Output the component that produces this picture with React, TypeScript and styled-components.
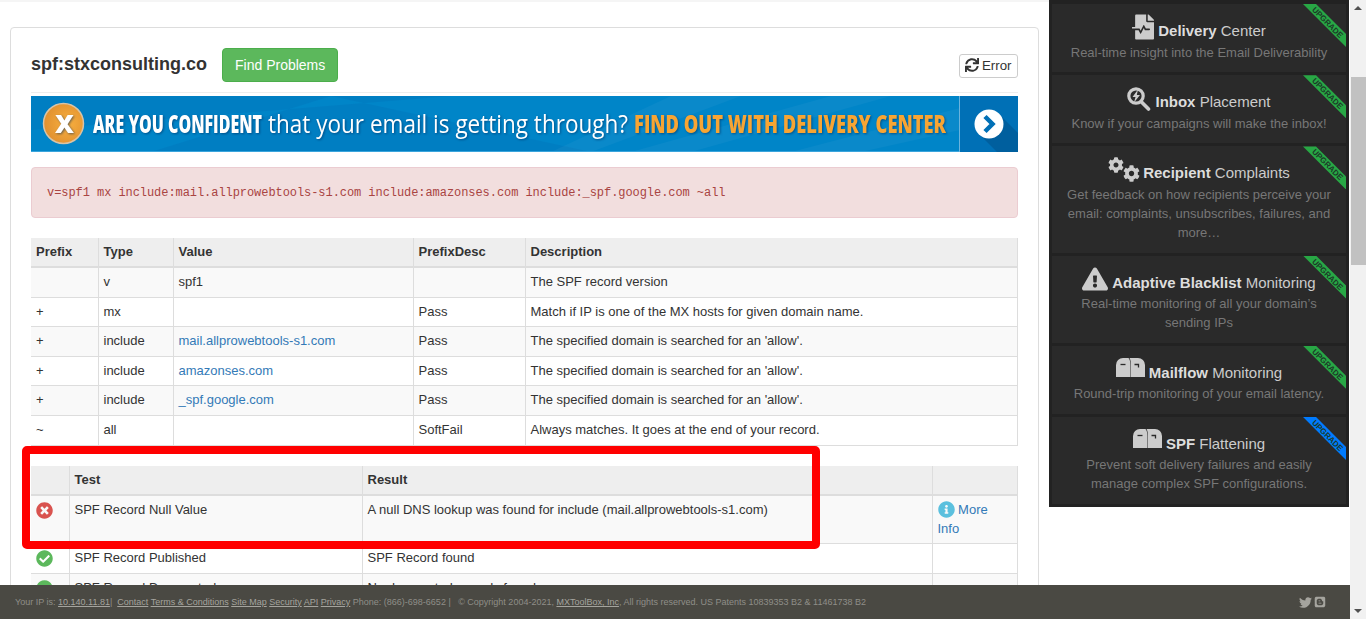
import React from "react";
import styled, { createGlobalStyle } from "styled-components";
import {
  FaCheckCircle,
  FaCog,
  FaExclamationTriangle,
  FaFileMedicalAlt,
  FaInfoCircle,
  FaSync,
  FaTimesCircle,
  FaTwitter,
  FaBlogger,
} from "react-icons/fa";

const GlobalStyle = createGlobalStyle`
  html, body {
    margin: 0;
    height: 100%;
    overflow: hidden;
    background: #fff;
  }
  body {
    font-family: "Liberation Sans", Arial, sans-serif;
    font-size: 13px;
    color: #333;
  }
  * { box-sizing: border-box; }
`;

const Page = styled.div`
  display: flex;
  width: 1366px;
  height: 619px;
  overflow: hidden;
`;

const Main = styled.div`
  display: flex;
  flex-direction: column;
  width: 1350px;
  height: 619px;
`;

const Content = styled.div`
  display: flex;
  align-items: flex-start;
  height: 585px;
  overflow: hidden;
`;

const LeftPane = styled.div`
  width: 1049px;
  height: 585px;
  padding: 25px 10px 0;
  border-top: 2px solid #f5f5f5;
  overflow: hidden;
`;

const Card = styled.div`
  border: 1px solid #ddd;
  border-radius: 4px;
  padding: 20px 20px 0;
  height: 700px;
`;

const TitleRow = styled.div`
  display: flex;
  align-items: flex-start;
  height: 45px;
  border-bottom: 1px solid #eee;
`;

const Title = styled.h2`
  margin: 0 15px 0 0;
  font-size: 18px;
  line-height: 33px;
  font-weight: bold;
  color: #333;
`;

const FindButton = styled.button`
  height: 34px;
  padding: 0 12px;
  background: #5cb85c;
  border: 1px solid #4cae4c;
  border-radius: 4px;
  color: #fff;
  font: 14px "Liberation Sans", Arial, sans-serif;
`;

const ErrorButton = styled.button`
  display: flex;
  align-items: center;
  gap: 3px;
  height: 24px;
  width: 59px;
  margin: 6px 0 0 auto;
  padding: 0 0 2px 5px;
  background: #fff;
  border: 1px solid #ccc;
  border-radius: 3px;
  color: #333;
  font: 13.3px "Liberation Sans", Arial, sans-serif;
`;

const BannerBox = styled.div`
  margin-top: 3px;
  height: 56px;
`;

const BannerArt = styled.svg`
  display: block;
  width: 987px;
  height: 56px;
`;

const BannerText = styled.text<{ $weight: number; $size: number; $color: string }>`
  font-family: "Open Sans", sans-serif;
  font-weight: ${({ $weight }) => $weight};
  font-size: ${({ $size }) => $size}px;
  fill: ${({ $color }) => $color};
  filter: drop-shadow(1px 1px 1px rgba(0, 40, 90, 0.55));
`;

const RecordAlert = styled.div`
  margin-top: 15px;
  height: 51px;
  padding: 0 15px;
  display: flex;
  align-items: center;
  background: #f2dede;
  border: 1px solid #ebccd1;
  border-radius: 4px;
  color: #a94442;
  font-family: "Liberation Mono", monospace;
  font-size: 12px;
  letter-spacing: -0.06px;
`;

const Table = styled.table<{ $top: number }>`
  width: 986px;
  margin-top: ${({ $top }) => $top}px;
  border-collapse: collapse;
  table-layout: fixed;
  font-size: 13px;
  line-height: 18.57px;
`;

const Col = styled.col<{ $w: number }>`
  width: ${({ $w }) => $w}px;
`;

const Th = styled.th`
  padding: 4.6px 5px 5px;
  text-align: left;
  font-weight: bold;
  background: #eee;
  border-bottom: 2px solid #ddd;
  border-left: 1px solid #ddd;
  border-right: 1px solid #ddd;
  &:first-child { border-left: 0; }
`;

const Td = styled.td`
  padding: 5px;
  vertical-align: top;
  border-bottom: 1px solid #ddd;
  border-left: 1px solid #ddd;
  border-right: 1px solid #ddd;
  &:first-child { border-left: 0; }
`;

const Tr = styled.tr`
  &:nth-child(odd) { background: #f9f9f9; }
`;

const Link = styled.a`
  color: #337ab7;
`;

const TestsWrap = styled.div`
  position: relative;
  margin-top: 20.4px;
`;

const RedBox = styled.div`
  position: absolute;
  left: -9px;
  top: -20px;
  width: 798px;
  height: 103px;
  border: 8px solid #f00;
  border-radius: 5px;
`;

const StatusCell = styled(Td)`
  padding: 6px 5px 0;
  line-height: 0;
`;

const Fail = styled(FaTimesCircle)`
  width: 17px;
  height: 17px;
  color: #d9534f;
`;

const Pass = styled(FaCheckCircle)`
  width: 17px;
  height: 17px;
  color: #5cb85c;
`;

const Info = styled(FaInfoCircle)`
  width: 17px;
  height: 17px;
  color: #5bc0de;
  vertical-align: -4px;
`;

const Sidebar = styled.div`
  width: 300px;
  padding: 4px 3px 3px;
  background: #222;
  display: flex;
  flex-direction: column;
  gap: 3px;
`;

const Promo = styled.div`
  position: relative;
  padding: 10px 12px 10.7px;
  background: #2a2a2a;
  text-align: center;
  overflow: hidden;
`;

const PromoTitle = styled.div`
  display: flex;
  justify-content: center;
  align-items: flex-end;
  gap: 4px;
  height: 28.5px;
  font-size: 15px;
  line-height: 20px;
  color: #ccc;
  b { color: #ddd; }
`;

const PromoLabel = styled.span`
  margin-bottom: 1.5px;
`;

const PromoText = styled.div`
  font-size: 13px;
  line-height: 19px;
  color: #777;
`;

const Ribbon = styled.div<{ $color: string }>`
  position: absolute;
  top: 0;
  right: 0;
  width: 43px;
  height: 43px;
  background: ${({ $color }) => $color};
  clip-path: polygon(0 0, 13px 0, 43px 30px, 43px 43px);
`;

const RibbonText = styled.span`
  position: absolute;
  top: 14px;
  left: 1px;
  width: 46px;
  text-align: center;
  font-size: 8px;
  font-weight: bold;
  line-height: 10px;
  color: #1c3a28;
  transform: rotate(45deg);
`;

const FileIcon = styled(FaFileMedicalAlt)`
  width: 22px;
  height: 26px;
  margin-bottom: 3px;
`;

const CogsGroup = styled.span`
  display: flex;
  width: 31px;
  height: 25px;
  margin-bottom: 3px;
`;

const SmallCog = styled(FaCog)`
  flex: none;
  width: 16px;
  height: 16px;
  align-self: flex-start;
`;

const LargeCog = styled(FaCog)`
  flex: none;
  width: 17px;
  height: 17px;
  margin-left: -1px;
  align-self: flex-end;
`;

const CogsIcon = () => (
  <CogsGroup>
    <SmallCog />
    <LargeCog />
  </CogsGroup>
);

const WarnIcon = styled(FaExclamationTriangle)`
  width: 26px;
  height: 24px;
  margin-bottom: 3px;
`;

const DrawnIcon = styled.svg<{ $w: number; $h: number; $lift: number }>`
  width: ${({ $w }) => $w}px;
  height: ${({ $h }) => $h}px;
  margin-bottom: ${({ $lift }) => $lift}px;
`;

const InboxIcon = () => (
  <DrawnIcon viewBox="0 0 24 24" $w={24} $h={24} $lift={3}>
    <circle cx="9" cy="9" r="7.200" fill="none" stroke="#ccc" strokeWidth="3.200" />
    <path d="M11 2.500 5.500 10h3l-1.500 5.500L13 8H9.800z" fill="#ccc" />
    <path d="M14.500 15l7 7" stroke="#ccc" strokeWidth="3.600" strokeLinecap="round" />
  </DrawnIcon>
);

const MailboxIcon = () => (
  <DrawnIcon viewBox="0 0 29 19" $w={29} $h={19} $lift={7}>
    <path d="M0 19V7a7 7 0 0 1 7-7h5.500c1.300 1.500 2 4 2 7v12z" fill="#ccc" />
    <path d="M15 19V7c0-3-.6-5.500-1.500-7H22a7 7 0 0 1 7 7v12z" fill="#ccc" />
    <path d="M4.500 6.500h5" stroke="#2a2a2a" strokeWidth="1.300" />
    <path d="M18.500 6.500h4v3" stroke="#2a2a2a" strokeWidth="1.300" fill="none" />
  </DrawnIcon>
);

const Footer = styled.div`
  display: flex;
  align-items: center;
  justify-content: space-between;
  height: 34px;
  padding: 0 24px 0 15px;
  background: #4a4943;
  color: #8f8e88;
  font-size: 9px;
  white-space: pre;
  a { color: #a5a49e; text-decoration: underline; }
`;

const FooterIcons = styled.div`
  display: flex;
  gap: 2px;
  color: #a5a49e;
`;

const Scrollbar = styled.div`
  display: flex;
  flex-direction: column;
  align-items: center;
  width: 16px;
  height: 619px;
  background: #f1f1f1;
`;

const ScrollArrow = styled.div<{ $down?: boolean }>`
  width: 0;
  height: 0;
  margin-top: ${({ $down }) => ($down ? "auto" : "6px")};
  margin-bottom: ${({ $down }) => ($down ? "6px" : "0")};
  border-left: 4px solid transparent;
  border-right: 4px solid transparent;
  border-bottom: ${({ $down }) => ($down ? "0" : "4px solid #505050")};
  border-top: ${({ $down }) => ($down ? "4px solid #505050" : "0")};
`;

const ScrollThumb = styled.div`
  width: 15px;
  height: 188px;
  margin-top: 67px;
  background: #c1c1c1;
`;

const Banner = () => (
  <BannerBox>
    <BannerArt viewBox="0 0 987 56">
      <defs>
        <radialGradient id="orb" cx="0.6" cy="0.5" r="0.7">
          <stop offset="0" stopColor="#f8b040" />
          <stop offset="1" stopColor="#dc8a2c" />
        </radialGradient>
      </defs>
      <rect width="987" height="56" fill="#0085c8" />
      <path d="M0 0h420L0 34z M120 56 560 56 300 0z" fill="#0079bd" opacity="0.55" />
      <path d="M520 56 640 0h70L560 56zM600 56 800 0h60L660 56zM760 56 929 12V34L830 56z" fill="#fff" opacity="0.04" />
      <rect y="55" width="987" height="1" fill="#3aa5dc" />
      <circle cx="32.500" cy="27.500" r="20" fill="url(#orb)" stroke="#d9c3a5" strokeWidth="1.500" />
      <BannerText x="24" y="37" textLength="19" lengthAdjust="spacingAndGlyphs" $weight={800} $size={25} $color="#fff">
        X
      </BannerText>
      <BannerText x="62" y="37" textLength="169" lengthAdjust="spacingAndGlyphs" $weight={800} $size={24} $color="#fff">
        ARE YOU CONFIDENT
      </BannerText>
      <BannerText x="237" y="37" textLength="360" lengthAdjust="spacingAndGlyphs" $weight={400} $size={25} $color="#fff">
        that your email is getting through?
      </BannerText>
      <BannerText x="603" y="37" textLength="312" lengthAdjust="spacingAndGlyphs" $weight={800} $size={25} $color="#f7a533">
        FIND OUT WITH DELIVERY CENTER
      </BannerText>
      <rect x="928" width="59" height="56" fill="#0070b6" />
      <path d="M948 38 966 56H987V37L968 18z" fill="#005f9e" />
      <rect x="928" width="1" height="56" fill="#6ab3dd" />
      <circle cx="958" cy="28" r="14.500" fill="#fff" />
      <path d="M954 20.500 961.500 28 954 35.500" fill="none" stroke="#0070b6" strokeWidth="4.500" />
    </BannerArt>
  </BannerBox>
);

const RECORDS = [
  ["", "v", "spf1", "", "The SPF record version"],
  ["+", "mx", "", "Pass", "Match if IP is one of the MX hosts for given domain name."],
  ["+", "include", "mail.allprowebtools-s1.com", "Pass", "The specified domain is searched for an 'allow'."],
  ["+", "include", "amazonses.com", "Pass", "The specified domain is searched for an 'allow'."],
  ["+", "include", "_spf.google.com", "Pass", "The specified domain is searched for an 'allow'."],
  ["~", "all", "", "SoftFail", "Always matches. It goes at the end of your record."],
];

const PROMOS = [
  { icon: <FileIcon />, bold: "Delivery", rest: "Center", text: "Real-time insight into the Email Deliverability", color: "#28a745" },
  { icon: <InboxIcon />, bold: "Inbox", rest: "Placement", text: "Know if your campaigns will make the inbox!", color: "#28a745" },
  { icon: <CogsIcon />, bold: "Recipient", rest: "Complaints", text: "Get feedback on how recipients perceive your email: complaints, unsubscribes, failures, and more…", color: "#28a745" },
  { icon: <WarnIcon />, bold: "Adaptive Blacklist", rest: "Monitoring", text: "Real-time monitoring of all your domain’s sending IPs", color: "#28a745" },
  { icon: <MailboxIcon />, bold: "Mailflow", rest: "Monitoring", text: "Round-trip monitoring of your email latency.", color: "#28a745" },
  { icon: <MailboxIcon />, bold: "SPF", rest: "Flattening", text: "Prevent soft delivery failures and easily manage complex SPF configurations.", color: "#007bff" },
];

export default function App() {
  return (
    <Page>
      <GlobalStyle />
      <Main>
        <Content>
          <LeftPane>
            <Card>
              <TitleRow>
                <Title>spf:stxconsulting.co</Title>
                <FindButton>Find Problems</FindButton>
                <ErrorButton>
                  <FaSync size={14} />
                  Error
                </ErrorButton>
              </TitleRow>
              <Banner />
              <RecordAlert>
                v=spf1 mx include:mail.allprowebtools-s1.com include:amazonses.com include:_spf.google.com ~all
              </RecordAlert>
              <Table $top={20}>
                <colgroup>
                  <Col $w={67} />
                  <Col $w={75} />
                  <Col $w={240} />
                  <Col $w={112} />
                  <Col $w={492} />
                </colgroup>
                <thead>
                  <tr>
                    <Th>Prefix</Th>
                    <Th>Type</Th>
                    <Th>Value</Th>
                    <Th>PrefixDesc</Th>
                    <Th>Description</Th>
                  </tr>
                </thead>
                <tbody>
                  {RECORDS.map((r, i) => (
                    <Tr key={i}>
                      <Td>{r[0]}</Td>
                      <Td>{r[1]}</Td>
                      <Td>{r[1] === "include" ? <Link>{r[2]}</Link> : r[2]}</Td>
                      <Td>{r[3]}</Td>
                      <Td>{r[4]}</Td>
                    </Tr>
                  ))}
                </tbody>
              </Table>
              <TestsWrap>
                <Table $top={0}>
                  <colgroup>
                    <Col $w={38} />
                    <Col $w={293} />
                    <Col $w={570} />
                    <Col $w={85} />
                  </colgroup>
                  <thead>
                    <tr>
                      <Th />
                      <Th>Test</Th>
                      <Th>Result</Th>
                      <Th />
                    </tr>
                  </thead>
                  <tbody>
                    <Tr>
                      <StatusCell><Fail /></StatusCell>
                      <Td>SPF Record Null Value</Td>
                      <Td>A null DNS lookup was found for include (mail.allprowebtools-s1.com)</Td>
                      <Td><Link><Info /> More Info</Link></Td>
                    </Tr>
                    <Tr>
                      <StatusCell><Pass /></StatusCell>
                      <Td>SPF Record Published</Td>
                      <Td>SPF Record found</Td>
                      <Td />
                    </Tr>
                    <Tr>
                      <StatusCell><Pass /></StatusCell>
                      <Td>SPF Record Deprecated</Td>
                      <Td>No deprecated records found</Td>
                      <Td />
                    </Tr>
                  </tbody>
                </Table>
                <RedBox />
              </TestsWrap>
            </Card>
          </LeftPane>
          <Sidebar>
            {PROMOS.map((p) => (
              <Promo key={p.bold}>
                <PromoTitle>
                  {p.icon}
                  <PromoLabel><b>{p.bold}</b> {p.rest}</PromoLabel>
                </PromoTitle>
                <PromoText>{p.text}</PromoText>
                <Ribbon $color={p.color}>
                  <RibbonText>UPGRADE</RibbonText>
                </Ribbon>
              </Promo>
            ))}
          </Sidebar>
        </Content>
        <Footer>
          <span>
            {"Your IP is: "}<a>10.140.11.81</a>{"|  "}<a>Contact</a> <a>Terms &amp; Conditions</a> <a>Site Map</a> <a>Security</a> <a>API</a> <a>Privacy</a>
            {" Phone: (866)-698-6652 |   © Copyright 2004-2021, "}<a>MXToolBox, Inc</a>{", All rights reserved. US Patents 10839353 B2 & 11461738 B2"}
          </span>
          <FooterIcons>
            <FaTwitter size={13} />
            <FaBlogger size={12} />
          </FooterIcons>
        </Footer>
      </Main>
      <Scrollbar>
        <ScrollArrow />
        <ScrollThumb />
        <ScrollArrow $down />
      </Scrollbar>
    </Page>
  );
}
